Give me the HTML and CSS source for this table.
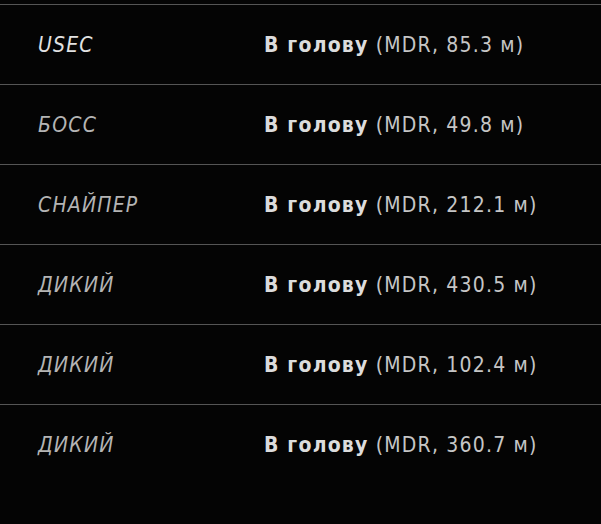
FILE: index.html
```html
<!DOCTYPE html>
<html lang="ru">
<head>
<meta charset="utf-8">
<link rel="stylesheet" href="styles.css">
</head>
<body>
<div class="list">
  <div class="row"><span class="who who-main">USEC</span><span class="how"><b>В голову</b> (MDR, 85.3 м)</span></div>
  <div class="row"><span class="who">БОСС</span><span class="how"><b>В голову</b> (MDR, 49.8 м)</span></div>
  <div class="row"><span class="who">СНАЙПЕР</span><span class="how"><b>В голову</b> (MDR, 212.1 м)</span></div>
  <div class="row"><span class="who">ДИКИЙ</span><span class="how"><b>В голову</b> (MDR, 430.5 м)</span></div>
  <div class="row"><span class="who">ДИКИЙ</span><span class="how"><b>В голову</b> (MDR, 102.4 м)</span></div>
  <div class="row"><span class="who">ДИКИЙ</span><span class="how"><b>В голову</b> (MDR, 360.7 м)</span></div>
</div>
</body>
</html>
```

FILE: styles.css
```css
html, body {
  margin: 0;
  background: #040404;
  height: 100%;
}
body {
  font-family: "DejaVu Sans Condensed", "DejaVu Sans", sans-serif;
  font-size: 21px;
  letter-spacing: 1.2px;
}
.list {
  padding-top: 4px;
}
.row {
  display: grid;
  grid-template-columns: 226px 1fr;
  align-items: center;
  height: 79px;
  border-top: 1px solid #555555;
  padding-left: 38px;
}
.who {
  font-style: italic;
  color: #b4b4b4;
}
.who-main {
  color: #e2e2e2;
}
.how {
  color: #c6c6c6;
}
.how b {
  color: #dcdcdc;
  font-weight: bold;
}
```
